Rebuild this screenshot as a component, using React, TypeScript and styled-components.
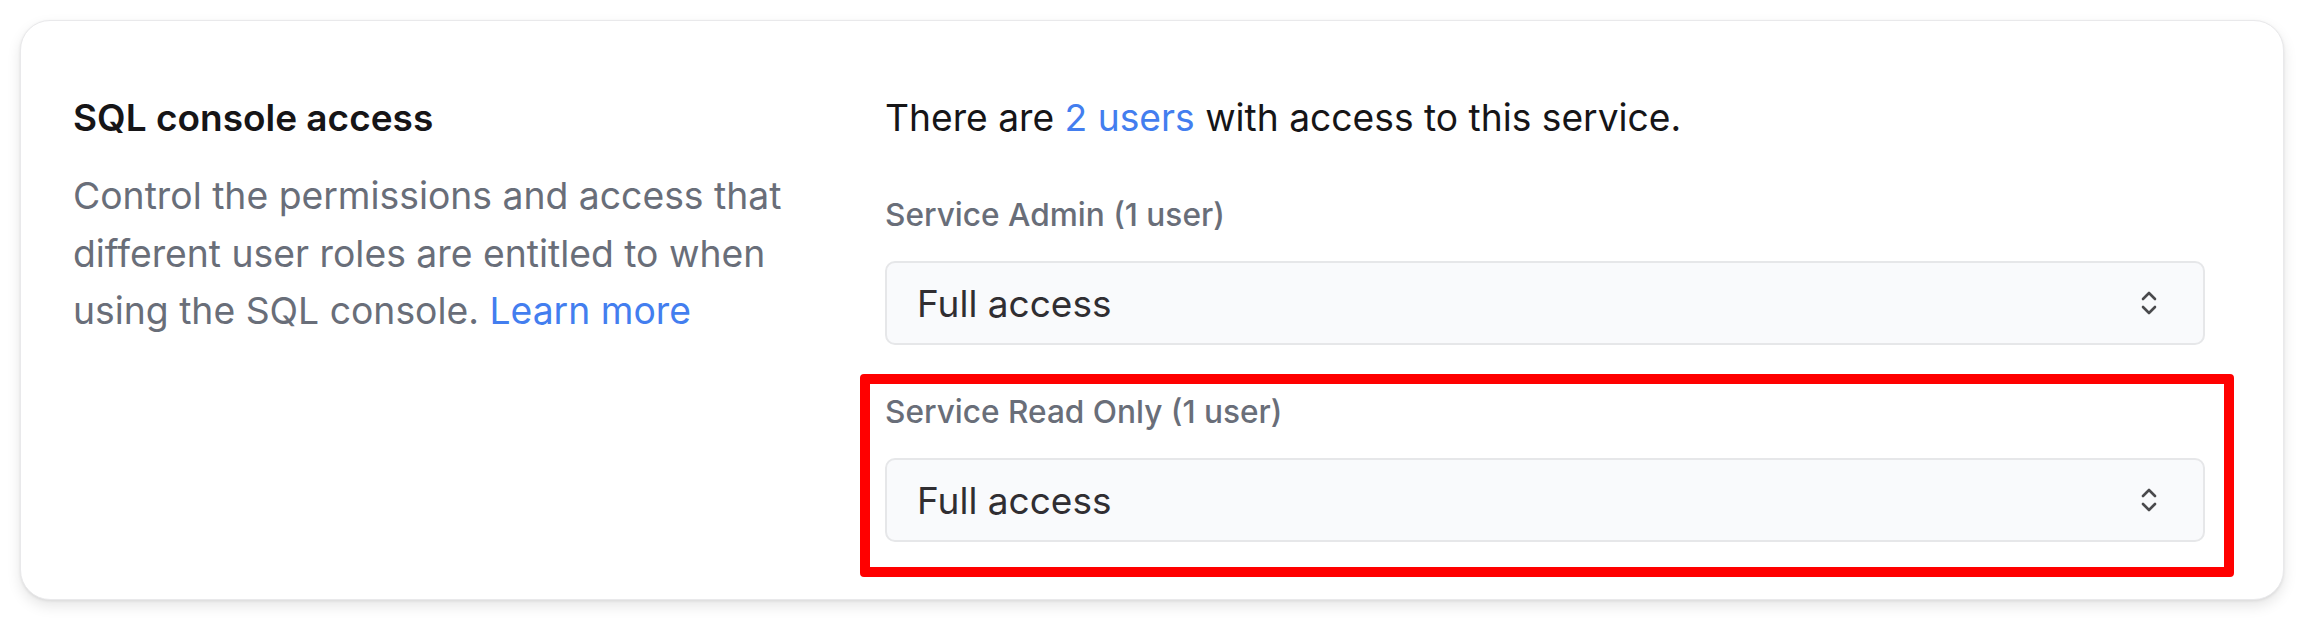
import React from "react";
import styled, { createGlobalStyle } from "styled-components";

const GlobalStyle = createGlobalStyle`
  html, body {
    margin: 0;
    padding: 0;
    background: #ffffff;
  }
  body {
    font-family: Inter, "Noto Sans", sans-serif;
    -webkit-font-smoothing: antialiased;
  }
`;

const Page = styled.div`
  padding: 20px;
  box-sizing: border-box;
  width: 2304px;
  height: 620px;
`;

const Card = styled.section`
  box-sizing: border-box;
  height: 580px;
  background: #ffffff;
  border: 1px solid #e9e9eb;
  border-radius: 30px;
  box-shadow: 0 6px 14px rgba(0, 0, 0, 0.1), 0 1px 3px rgba(0, 0, 0, 0.08);
  padding: 70px 78px 0 52px;
  display: grid;
  grid-template-columns: 760px 1fr;
  column-gap: 52px;
  align-items: start;
`;

const Intro = styled.div`
  display: flex;
  flex-direction: column;
`;

const Heading = styled.h2`
  margin: 0;
  font-size: 37px;
  line-height: 54px;
  font-weight: 600;
  color: #161517;
`;

const Description = styled.p`
  margin: 22px 0 0;
  font-size: 37.3px;
  line-height: 57.5px;
  font-weight: 400;
  color: #696e79;
`;

const Link = styled.a`
  color: #437eef;
  text-decoration: none;
`;

const Settings = styled.div`
  display: flex;
  flex-direction: column;
`;

const Summary = styled.p`
  margin: 0 0 49px;
  font-size: 37.2px;
  line-height: 54px;
  font-weight: 400;
  color: #161517;
`;

const RoleGroup = styled.div`
  position: relative;
  display: flex;
  flex-direction: column;
  gap: 25px;
  & + & {
    margin-top: 46px;
  }
`;

const Highlight = styled.div`
  position: absolute;
  top: -17px;
  left: -25px;
  right: -29px;
  bottom: -35px;
  border: 10px solid #ff0000;
  border-radius: 4px;
  pointer-events: none;
`;

const RoleLabel = styled.label`
  font-size: 31.6px;
  line-height: 42px;
  font-weight: 500;
  color: #696e79;
`;

const Select = styled.button`
  box-sizing: border-box;
  width: 100%;
  height: 84px;
  display: flex;
  align-items: center;
  justify-content: space-between;
  padding: 0 46px 0 30px;
  background: #f9fafc;
  border: 2px solid #e6e7e9;
  border-radius: 10px;
  font-family: Inter, "Noto Sans", sans-serif;
  font-size: 37px;
  font-weight: 400;
  color: #302e32;
  cursor: pointer;
  text-align: left;
`;

const Chevrons = () => (
  <svg width="16" height="26" viewBox="0 0 16 26" fill="none">
    <path
      d="M2 9 L8 3 L14 9 M2 17 L8 23 L14 17"
      stroke="#4a4a4d"
      strokeWidth="2.6"
      strokeLinecap="round"
      strokeLinejoin="round"
    />
  </svg>
);

type Role = { name: string; users: number; access: string; highlighted?: boolean };

const roles: Role[] = [
  { name: "Service Admin", users: 1, access: "Full access" },
  { name: "Service Read Only", users: 1, access: "Full access", highlighted: true },
];

export default function App() {
  return (
    <>
      <GlobalStyle />
      <Page>
        <Card>
          <Intro>
            <Heading>SQL console access</Heading>
            <Description>
              Control the permissions and access that different user roles are entitled to when
              using the SQL console. <Link href="#">Learn more</Link>
            </Description>
          </Intro>
          <Settings>
            <Summary>
              There are <Link href="#">2 users</Link> with access to this service.
            </Summary>
            {roles.map((role) => (
              <RoleGroup key={role.name}>
                <RoleLabel>
                  {role.name} ({role.users} user)
                </RoleLabel>
                <Select type="button">
                  <span>{role.access}</span>
                  <Chevrons />
                </Select>
                {role.highlighted && <Highlight />}
              </RoleGroup>
            ))}
          </Settings>
        </Card>
      </Page>
    </>
  );
}
